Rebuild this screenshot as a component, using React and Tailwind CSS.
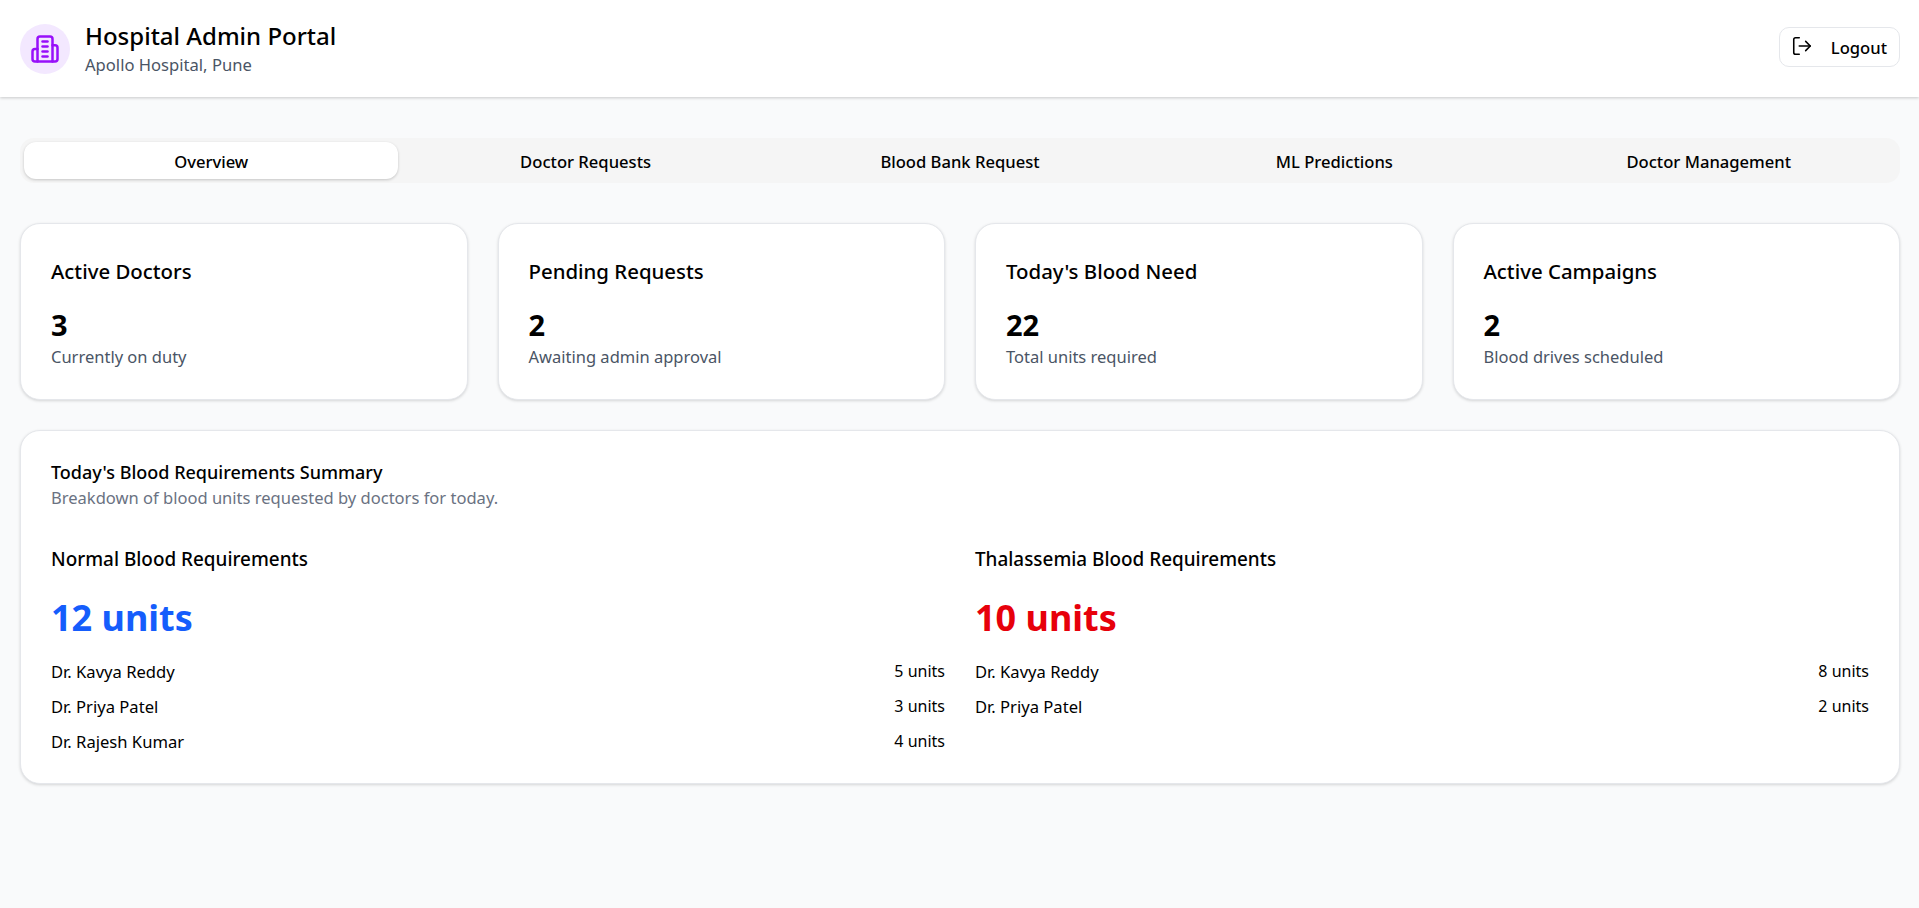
import React from "react";
import { LogOut } from "lucide-react";

const stats = [
  { title: "Active Doctors", value: "3", note: "Currently on duty" },
  { title: "Pending Requests", value: "2", note: "Awaiting admin approval" },
  { title: "Today's Blood Need", value: "22", note: "Total units required" },
  { title: "Active Campaigns", value: "2", note: "Blood drives scheduled" },
];

const tabs = ["Overview", "Doctor Requests", "Blood Bank Request", "ML Predictions", "Doctor Management"];

const normal = [
  ["Dr. Kavya Reddy", "5 units"],
  ["Dr. Priya Patel", "3 units"],
  ["Dr. Rajesh Kumar", "4 units"],
];

const thal = [
  ["Dr. Kavya Reddy", "8 units"],
  ["Dr. Priya Patel", "2 units"],
];

function Column({ title, total, color, rows }) {
  return (
    <div>
      <h3 className="text-[18.9px] leading-[28px] font-medium text-black">{title}</h3>
      <div className={"mt-[25px] text-[36px] leading-[40px] font-bold " + color}>{total}</div>
      <div className="mt-[20px] flex flex-col gap-[8px]">
        {rows.map((r) => (
          <div key={r[0]} className="flex justify-between text-[16.6px] leading-[27px] h-[27px] text-black">
            <span>{r[0]}</span>
            <span className="text-[16px]">{r[1]}</span>
          </div>
        ))}
      </div>
    </div>
  );
}

export default function App() {
  return (
    <div className="min-h-[908px] bg-[#f9fafb] font-['Noto_Sans',sans-serif] text-black">
      <header className="h-[97px] bg-white shadow-[0_1px_3px_rgba(0,0,0,0.2)] flex items-center justify-between pl-[20px] pr-[19px]">
        <div className="flex items-center gap-[15px]">
          <div className="w-[50px] h-[50px] rounded-full bg-[#f3e8ff] flex items-center justify-center">
            <svg width="30" height="30" viewBox="0 0 24 24" fill="none" stroke="#9810fa" strokeWidth="2" strokeLinecap="round" strokeLinejoin="round">
              <path d="M6 22V4a2 2 0 0 1 2-2h8a2 2 0 0 1 2 2v18Z" />
              <path d="M6 12H4a2 2 0 0 0-2 2v6a2 2 0 0 0 2 2h2" />
              <path d="M18 9h2a2 2 0 0 1 2 2v9a2 2 0 0 1-2 2h-2" />
              <path d="M10 6h4" />
              <path d="M10 10h4" />
              <path d="M10 14h4" />
              <path d="M10 18h4" />
            </svg>
          </div>
          <div>
            <h1 className="text-[24px] leading-[32px] font-medium -mt-[1px]">Hospital Admin Portal</h1>
            <p className="mt-[1px] text-[16.6px] leading-[24px] text-[#4a5565]">Apollo Hospital, Pune</p>
          </div>
        </div>
        <button className="h-[40px] w-[121px] mb-[3px] rounded-[10px] border border-[#e5e7eb] bg-white flex items-center justify-between pl-[11px] pr-[12px] text-[16.6px] font-medium">
          <LogOut size={22} strokeWidth={1.7} className="-mt-[2px]" />
          <span className="pt-[3px]">Logout</span>
        </button>
      </header>

      <main className="pl-[20px] pr-[19px] pt-[41px]">
        <div className="h-[45px] rounded-[14px] bg-[#f5f5f5] p-[4px] grid grid-cols-5">
          {tabs.map((t, i) => (
            <div
              key={t}
              className={
                "flex items-center justify-center rounded-[12px] text-[16.6px] leading-[24px] font-medium pt-[2px] " +
                (i === 0 ? "bg-white shadow-[0_1px_3px_rgba(0,0,0,0.2)]" : "")
              }
            >
              {t}
            </div>
          ))}
        </div>

        <div className="mt-[40px] grid grid-cols-4 gap-[30px]">
          {stats.map((s) => (
            <div key={s.title} className="h-[177px] rounded-[20px] bg-white border border-[#e5e7eb] shadow-[0_1px_3px_rgba(0,0,0,0.15)] px-[30px] pt-[33px]">
              <h2 className="text-[20.4px] leading-[28px] font-medium">{s.title}</h2>
              <div className="mt-[22px] text-[29px] leading-[36px] font-bold">{s.value}</div>
              <p className="mt-[2px] text-[16.5px] leading-[24px] text-[#4a5565]">{s.note}</p>
            </div>
          ))}
        </div>

        <section className="mt-[30px] h-[354px] rounded-[20px] bg-white border border-[#e5e7eb] shadow-[0_1px_3px_rgba(0,0,0,0.15)] px-[30px] pt-[27px]">
          <h2 className="text-[18px] leading-[28px] font-medium">Today's Blood Requirements Summary</h2>
          <p className="text-[16.55px] leading-[24px] text-[#6a7282]">Breakdown of blood units requested by doctors for today.</p>
          <div className="mt-[35px] grid grid-cols-2 gap-[30px]">
            <Column title="Normal Blood Requirements" total="12 units" color="text-[#155dfc]" rows={normal} />
            <Column title="Thalassemia Blood Requirements" total="10 units" color="text-[#e7000b]" rows={thal} />
          </div>
        </section>
      </main>
    </div>
  );
}
